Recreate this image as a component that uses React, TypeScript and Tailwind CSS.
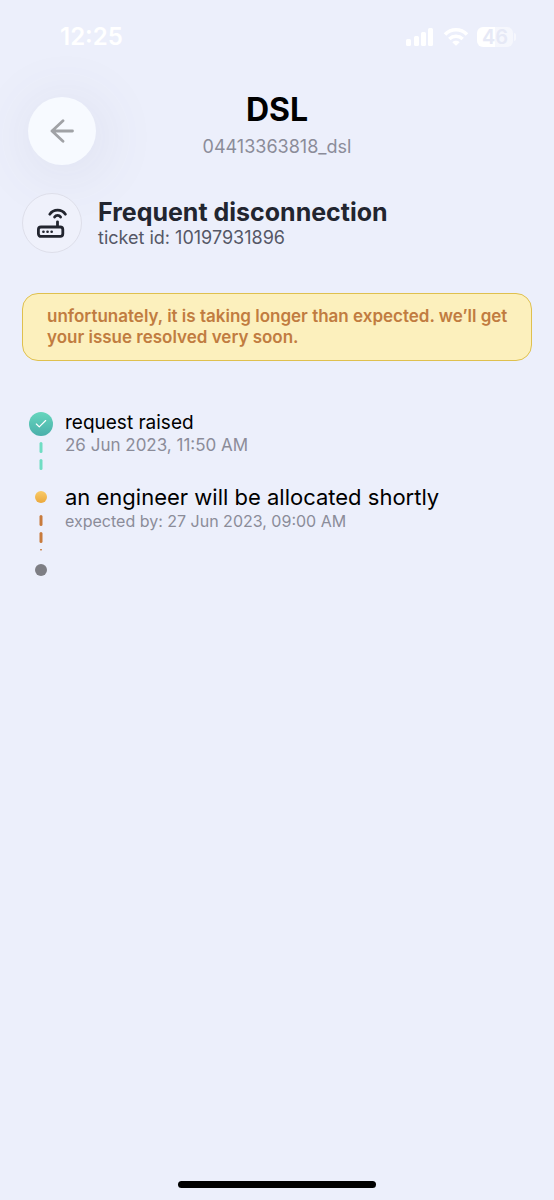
import { Check } from "lucide-react";
import clsx from "clsx";

interface Step {
  title: string;
  note: string;
  status: "done" | "current" | "pending";
}

const steps: Step[] = [
  { title: "request raised", note: "26 Jun 2023, 11:50 AM", status: "done" },
  { title: "an engineer will be allocated shortly", note: "expected by: 27 Jun 2023, 09:00 AM", status: "current" },
  { title: "", note: "", status: "pending" },
];

function StatusBar() {
  return (
    <div className="flex h-[74px] items-center justify-between pl-15 pr-[38px] text-white">
      <span className="text-2xl font-semibold">12:25</span>
      <div className="flex items-center gap-2">
        <svg width="30" height="20" viewBox="0 0 30 20" fill="currentColor" aria-label="signal">
          <rect x="1" y="12" width="5" height="7" rx="1.5" />
          <rect x="9" y="9" width="5" height="10" rx="1.5" />
          <rect x="16" y="5" width="5" height="14" rx="1.5" />
          <rect x="23" y="1" width="5" height="18" rx="1.5" />
        </svg>
        <svg width="26" height="20" viewBox="0 0 26 20" fill="none" stroke="currentColor" strokeWidth="3.6" aria-label="wifi">
          <path d="M2 7.5C8.2 1.2 17.8 1.2 24 7.5" />
          <path d="M6.3 12C10.2 8.4 15.8 8.4 19.7 12" />
          <path d="M13 18.8L9.3 15.2C11.4 13.3 14.6 13.3 16.7 15.2Z" fill="currentColor" stroke="none" />
        </svg>
        <div className="flex items-center gap-px">
          <div className="flex h-5 w-9 items-center justify-center rounded-md bg-linear-to-r from-white from-50% to-white/50 to-50% text-xl font-semibold text-[#e6e9f6]">
            46
          </div>
          <div className="h-2 w-0.5 rounded-r-full bg-white/50" />
        </div>
      </div>
    </div>
  );
}

function RouterIcon() {
  return (
    <svg width="32" height="32" viewBox="0 0 32 32" fill="none" stroke="#22252f" strokeWidth="2.8" strokeLinecap="round" aria-hidden="true">
      <rect x="2.4" y="20" width="24.4" height="9.4" rx="2.6" />
      <path d="M21.5 19.5V14.8" />
      <path d="M13.8 7.2C17.6 1.8 25.6 1.8 29.4 7.2" />
      <path d="M18.6 10C20 7.9 23.2 7.9 24.6 10" />
      <path d="M7.4 24.7H7.5M11.5 24.7H11.6M15.6 24.7H15.7" strokeWidth="2.6" />
    </svg>
  );
}

function StepMarker({ status }: { status: Step["status"] }) {
  if (status === "done") {
    return (
      <div className="flex h-6 w-6 items-center justify-center rounded-full bg-linear-to-b from-[#66d6bd] to-[#4aafaa]">
        <Check size={14} strokeWidth={2} className="text-white" />
      </div>
    );
  }
  return (
    <div className="flex h-6 w-6 items-center justify-center">
      <div
        className={clsx(
          "h-3 w-3 rounded-full",
          status === "current" ? "bg-linear-to-b from-[#f9cb68] to-[#eba83a]" : "bg-[#7e7e84]"
        )}
      />
    </div>
  );
}

export default function App() {
  return (
    <div className="flex min-h-screen flex-col bg-[#eceffb] font-['Inter',sans-serif]">
      <StatusBar />

      {/* Header */}
      <header className="mt-[18px] grid grid-cols-[68px_1fr_68px] px-7">
        <button
          aria-label="Back"
          className="mt-[5px] flex h-[68px] w-[68px] items-center justify-center rounded-full bg-[#f7faff] shadow-[4px_6px_56px_8px_rgba(90,95,130,0.08)]"
        >
          <svg width="24" height="24" viewBox="0 0 24 24" fill="none" stroke="#a0a2a6" strokeWidth="2.8" strokeLinecap="round" strokeLinejoin="round">
            <path d="M22.5 12H2M13 1.8L2 12L13 22.2" />
          </svg>
        </button>
        <div className="text-center">
          <h1 className="text-[32px] leading-9 font-bold text-black">DSL</h1>
          <p className="mt-[7px] text-lg leading-6 text-[#8b8c99]">04413363818_dsl</p>
        </div>
      </header>

      <main className="flex-1 px-[22px]">
        {/* Ticket */}
        <div className="mt-7 flex items-center gap-4">
          <div className="flex h-[60px] w-[60px] items-center justify-center rounded-full border border-[#dedfea] bg-[#eff1fb]">
            <RouterIcon />
          </div>
          <div className="pb-0.5">
            <h2 className="text-[25px] leading-8 font-bold text-[#22252f]">Frequent disconnection</h2>
            <p className="text-lg leading-5 text-[#555766]">ticket id: 10197931896</p>
          </div>
        </div>

        {/* Delay notice */}
        <p className="mt-10 rounded-2xl border border-[#dfc04e] bg-[#fcf0bd] py-3 pr-4 pl-6 text-[17px] leading-[21px] font-semibold text-[#c17c40]">
          unfortunately, it is taking longer than expected. we’ll get your issue resolved very soon.
        </p>

        {/* Timeline */}
        <ol className="mt-[51px] px-[7px]">
          {steps.map((step, i) => (
            <li key={i} className="flex h-[73px] gap-3">
              <div className="flex flex-col items-center">
                <StepMarker status={step.status} />
                {step.status !== "pending" && (
                  <svg
                    width="4"
                    height="38"
                    viewBox="0 0 4 38"
                    className={clsx("mt-[5px]", step.status === "done" ? "text-[#70ddc3]" : "text-[#c87b3c]")}
                    fill="currentColor"
                    aria-hidden="true"
                  >
                    <rect x="0.5" y="1" width="3" height="11" rx="1.5" />
                    <rect x="0.5" y="18" width="3" height="11" rx="1.5" />
                    {step.status === "current" && <rect x="1" y="35" width="2" height="1.5" rx="0.7" />}
                  </svg>
                )}
              </div>
              <div>
                <p className={clsx("text-black", step.status === "current" ? "text-[22px] leading-6" : "text-[19px] leading-[22px]")}>
                  {step.title}
                </p>
                <p className={clsx("text-[#8b8c99]", step.status === "current" ? "text-base leading-6" : "text-[17px] leading-[22px]")}>
                  {step.note}
                </p>
              </div>
            </li>
          ))}
        </ol>
      </main>

      {/* Home indicator */}
      <div className="mx-auto mb-3 h-[7px] w-[198px] rounded-full bg-black" />
    </div>
  );
}
